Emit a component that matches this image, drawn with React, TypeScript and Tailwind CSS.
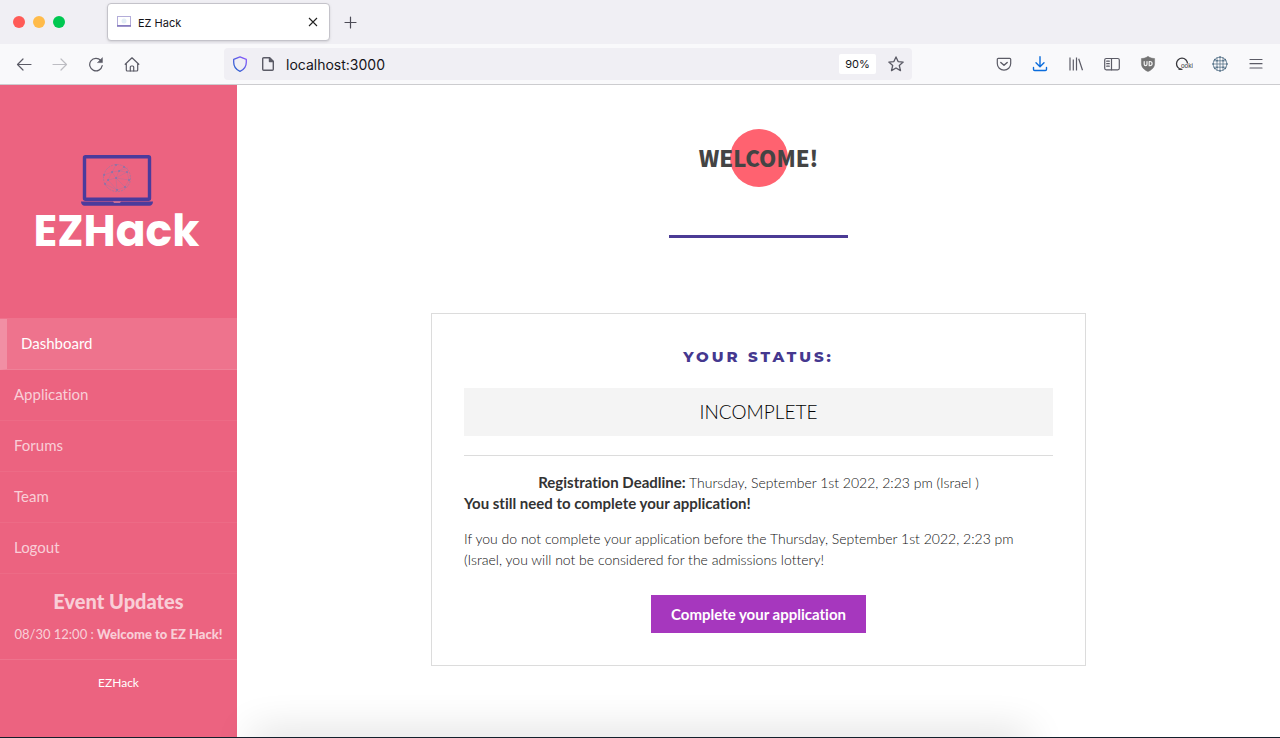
import type { ReactNode } from "react";

function IconButton({ label, children, className = "" }: { label: string; children: ReactNode; className?: string }) {
  return (
    <button type="button" aria-label={label} className={`flex size-9 shrink-0 items-center justify-center ${className}`}>
      <svg
        viewBox="0 0 16 16"
        className="size-4"
        fill="none"
        stroke="currentColor"
        strokeWidth="1.2"
        strokeLinecap="round"
        strokeLinejoin="round"
        aria-hidden="true"
      >
        {children}
      </svg>
    </button>
  );
}

function TabBar() {
  return (
    <div className="flex h-11 items-center bg-[#f0eff4] pl-3">
      <div className="flex w-[95px] gap-2 pl-px">
        <span className="size-3 rounded-full bg-[#ff5b57]" />
        <span className="size-3 rounded-full bg-[#ffbb4a]" />
        <span className="size-3 rounded-full bg-[#00c851]" />
      </div>
      <div className="flex h-[38px] w-[223px] items-center rounded border border-[#c4c3ca] bg-white px-2 shadow-sm">
        <svg viewBox="0 0 16 16" className="size-4" fill="none" aria-hidden="true">
          <rect x="1.500" y="2.500" width="13" height="9" stroke="#b3add9" />
          <path d="M1 12h14" stroke="#7468b5" strokeWidth="1.4" />
          <circle cx="8" cy="7" r="2.5" fill="#e3eef6" />
        </svg>
        <span className="ml-1.5 flex-1 pt-0.5 text-[11px] text-[#15141a]">EZ Hack</span>
        <button type="button" aria-label="Close tab" className="flex size-4 items-center justify-center">
          <svg viewBox="0 0 16 16" className="size-4" stroke="#222" strokeWidth="1.1" aria-hidden="true">
            <path d="M4 4l8 8M12 4l-8 8" />
          </svg>
        </button>
      </div>
      <IconButton label="New tab" className="ml-0.5 text-[#4c4b56]">
        <path d="M8.500 3v11M3 8.500h11" />
      </IconButton>
    </div>
  );
}

function Toolbar() {
  return (
    <div className="flex h-[41px] items-center border-b border-[#cccccf] bg-[#f9f9fb] px-1.5 text-[#5b5b66]">
      <IconButton label="Back">
        <path d="M15 8.500H1.500M7 3L1.500 8.500 7 14" />
      </IconButton>
      <IconButton label="Forward" className="text-[#bdbdc3]">
        <path d="M1 8.500h13.500M9 3L14.500 8.500 9 14" />
      </IconButton>
      <IconButton label="Reload">
        <path d="M14.200 9.700A6.300 6.300 0 1 1 12.800 4.500" strokeWidth="1.200" />
        <path d="M14.400 2v4.600h-4.600z" fill="currentColor" strokeWidth="0.600" />
      </IconButton>
      <IconButton label="Home">
        <path d="M1.200 8.300L8 1.800 14.800 8.300M2.300 7.300V14a1 1 0 0 0 1 1h9.400a1 1 0 0 0 1-1V7.300" />
        <path d="M6.300 15v-4a1 1 0 0 1 1-1h1.400a1 1 0 0 1 1 1v4" />
      </IconButton>
      <div className="ml-[74px] flex h-8 w-[688px] min-w-0 items-center rounded bg-[#f0eff4] px-2">
        <svg viewBox="0 0 16 16" className="size-4 shrink-0" fill="none" aria-hidden="true">
          <defs>
            <linearGradient id="shield" x1="0" y1="1" x2="1" y2="0">
              <stop offset="0" stopColor="#1f63c8" />
              <stop offset="1" stopColor="#9059ff" />
            </linearGradient>
          </defs>
          <path d="M8 .8l6.300 2.500v2.900C14.300 10 12 13.600 8 15.300 4 13.600 1.700 10 1.700 6.200V3.300z" stroke="url(#shield)" strokeWidth="1.300" strokeLinejoin="round" />
        </svg>
        <svg viewBox="0 0 16 16" className="ml-3 size-4 shrink-0" fill="none" stroke="#5b5b66" strokeWidth="1.400" strokeLinejoin="round" aria-hidden="true">
          <path d="M9.500 1.700H3.700a1 1 0 0 0-1 1v10.600a1 1 0 0 0 1 1h8.600a1 1 0 0 0 1-1V5.500z" />
          <path d="M9.500 1.700v3.800h3.800z" fill="#5b5b66" />
        </svg>
        <input
          type="text"
          aria-label="Address"
          defaultValue="localhost:3000"
          className="ml-2.5 h-8 min-w-0 flex-1 bg-transparent pt-px text-sm text-[#15141a] outline-none"
        />
        <button type="button" className="h-5 w-[37px] rounded-xs bg-white text-[11px] text-[#15141a]">
          90%
        </button>
        <button type="button" aria-label="Bookmark this page" className="ml-3 text-[#5b5b66]">
          <svg viewBox="0 0 16 16" className="size-4" fill="none" stroke="currentColor" strokeWidth="1.300" strokeLinejoin="round" aria-hidden="true">
            <path d="M8 .9l2.100 4.700 5.100.500-3.900 3.400 1.200 5.100L8 12l-4.500 2.600 1.200-5.100L.8 6.100l5.100-.500z" />
          </svg>
        </button>
      </div>
      <div className="ml-auto flex">
        <IconButton label="Save to Pocket">
          <path d="M2.300 2.300h11.400a1 1 0 0 1 1 1v4.200a6.700 6.700 0 0 1-13.400 0V3.300a1 1 0 0 1 1-1z" />
          <path d="M4.800 6.400L8 9.300l3.200-2.900" strokeWidth="1.400" />
        </IconButton>
        <IconButton label="Downloads" className="text-[#0a6cdc]">
          <path d="M8 .8v9.700M4 6.700l4 4 4-4M1.500 11.500v1.800a1.200 1.200 0 0 0 1.200 1.200h10.600a1.200 1.200 0 0 0 1.200-1.200v-1.800" strokeWidth="1.400" />
        </IconButton>
        <IconButton label="Library">
          <path d="M2 1.500v13M5.300 3.500v11M8.500 1.500v13M10.700 2.800l3.800 11.500" strokeLinecap="butt" />
        </IconButton>
        <IconButton label="Sidebars">
          <rect x=".7" y="2.500" width="14.600" height="11.300" rx="1.500" />
          <path d="M7.500 2.500v11.300M2.700 5.200h2.600M2.700 7.700h2.600M2.700 10.200h2.600" />
        </IconButton>
        <IconButton label="uBlock Origin">
          <path d="M8 .5c2 1.300 4.300 2 6.600 2v5c0 4-3 6.500-6.600 8-3.600-1.500-6.600-4-6.600-8v-5c2.300 0 4.600-.7 6.600-2z" fill="#747474" stroke="#747474" strokeWidth=".5" />
          <path d="M4.200 5.500v2.800a1.400 1.400 0 0 0 2.800 0V5.500M9.200 5.500v4.200h.8a2.100 2.100 0 0 0 0-4.200z" stroke="#f4f4f4" strokeWidth="1.200" />
        </IconButton>
        <button type="button" aria-label="Qoki" className="flex size-9 shrink-0 items-center justify-center">
          <svg viewBox="0 0 18 16" className="h-4 w-[18px]" fill="none" stroke="#37373c" aria-hidden="true">
            <path d="M6.500 13.200A5.500 5.500 0 1 1 12.500 7.500" strokeWidth="1.300" />
            <path d="M3.500 13.400h4" />
            <text x="6" y="12" fontSize="6.500" fontFamily="Liberation Sans, sans-serif" fill="#37373c" stroke="none">ooki</text>
          </svg>
        </button>
        <IconButton label="Network" className="text-[#4a6880]">
          <circle cx="8" cy="8" r="6.800" strokeWidth=".8" strokeDasharray="2 .7" />
          <path d="M5 1.500v13M11 1.500v13M8 1v14M1 8h14M1.800 4.800h12.400M1.800 11.200h12.400" strokeWidth=".7" />
          <path d="M8 1h.1M8 15h.1M1 8h.1M15 8h.1M2.800 3.500h.1M13.200 3.500h.1M2.800 12.500h.1M13.200 12.500h.1M5 4.800h.1M11 4.800h.1M5 11.200h.1M11 11.200h.1" strokeWidth="1.500" />
        </IconButton>
        <IconButton label="Open menu">
          <path d="M2 3.500h12M2 7.700h12M2 12h12" />
        </IconButton>
      </div>
    </div>
  );
}

function Logo() {
  return (
    <a href="#home" aria-label="EZHack home" className="flex h-[233px] flex-col items-center pt-[70px] pr-1 text-white">
      <svg viewBox="0 0 72 52" className="h-[52px] w-[72px]" fill="none" aria-hidden="true">
        <rect x="3.500" y="1.700" width="65" height="42.500" rx="1" stroke="#4b3b9c" strokeWidth="3.400" />
        <path d="M0 46.500h72c0 2.500-1.500 4.300-3.500 4.300h-65C1.500 50.800 0 49 0 46.500z" fill="#4b3b9c" />
        <path d="M32 46.500h8l-1 1.200h-6z" fill="#ed8098" />
        <circle cx="36" cy="23" r="13.500" stroke="#a0769f" strokeWidth=".8" strokeDasharray="2 1" />
        <path
          d="M23 20l8-3 7-1 9-3M35 10l-4 7-4 8-3 4M27 25l8-2 3-7 8 1 2 8-4 7-8 3-1-12 9 9M24 29l12 6M27 25l9 10M48 25l-13-2-4-6M43 12l-5 4M35 23l11-6"
          stroke="#b0739a"
          strokeWidth=".5"
        />
        <path d="M31 17h.1M38 16h.1M35 10h.1M43 12h.1M27 25h.1M24 29h.1M36 35h.1M44 32h.1M48 25h.1M35 23h.1M46 17h.1M23 20h.1" stroke="#5b79bd" strokeWidth="1.600" strokeLinecap="round" />
      </svg>
      <span className="font-['Poppins','Inter',sans-serif] text-[44px] leading-[48px] font-bold">EZHack</span>
    </a>
  );
}

const links = ["Application", "Forums", "Team", "Logout"];

function Sidebar() {
  return (
    <aside className="w-[237px] shrink-0 bg-[#ec6380] text-white/70">
      <Logo />
      <nav className="border-t border-white/10 text-[15px]">
        <a href="#dashboard" className="flex h-[51px] items-center border-b border-l-[7px] border-b-white/10 border-l-white/20 bg-white/10 pb-0.5 pl-3.5 text-white">
          Dashboard
        </a>
        {links.map((link) => (
          <a key={link} href={`#${link.toLowerCase()}`} className="flex h-[51px] items-center border-b border-white/5 pb-0.5 pl-3.5">
            {link}
          </a>
        ))}
      </nav>
      <section className="h-[86px] border-b border-white/10 px-2 pt-3.5 text-center">
        <h2 className="text-xl leading-[26px] font-black">Event Updates</h2>
        <p className="pt-2.5 text-[13px] leading-5 whitespace-nowrap">
          08/30 12:00 : <b className="font-black">Welcome to EZ Hack!</b>
        </p>
      </section>
      <p className="pt-3.5 text-center text-xs leading-[18px] text-white">EZHack</p>
    </aside>
  );
}

function StatusCard() {
  return (
    <section className="mt-[75px] w-[655px] max-w-full border border-[#dcdcdc] p-8 text-sm leading-[21px] font-light text-[#111]">
      <h2 className="text-center font-['Montserrat','Inter',sans-serif] text-[15px] leading-[21px] font-extrabold tracking-[3px] text-[#45388f]">
        YOUR STATUS:
      </h2>
      <p className="mt-[21px] bg-[#f4f4f4] pb-px text-center text-[19px] leading-[47px] text-black">INCOMPLETE</p>
      <hr className="mt-[19px] border-[#dcdcdc]" />
      <p className="mt-4 text-center">
        <b className="text-[15px] leading-[21px] font-bold text-[#333]">Registration Deadline:</b> Thursday, September 1st 2022, 2:23 pm (Israel )
      </p>
      <p className="text-[15px] leading-[21px] font-bold text-[#333]">You still need to complete your application!</p>
      <p className="mt-3.5">
        If you do not complete your application before the Thursday, September 1st 2022, 2:23 pm (Israel, you will not be considered for the admissions lottery!
      </p>
      <div className="mt-[25px] flex justify-center">
        <a href="#application" className="bg-[#a637be] px-5 text-[15px] leading-[38px] font-bold text-white">
          Complete your application
        </a>
      </div>
    </section>
  );
}

export default function App() {
  return (
    <div className="relative flex min-h-screen flex-col overflow-hidden border-b border-[#14202c] bg-white font-['Inter',sans-serif]">
      <header>
        <TabBar />
        <Toolbar />
      </header>
      <div className="flex flex-1 font-['Lato',sans-serif] [font-variant-ligatures:none]">
        <Sidebar />
        <main className="flex min-w-0 flex-1 flex-col items-center">
          <div className="mt-11 flex size-[58px] items-center justify-center rounded-full bg-[#ff6270] pb-0.5">
            <h1 className="font-['Noto_Sans_CJK_JP',sans-serif] text-[22px] leading-8 font-black whitespace-nowrap text-[#444]">
              WELCOME!
            </h1>
          </div>
          <div className="mt-12 h-[3px] w-[179px] bg-[#4b3b95]" />
          <StatusCard />
        </main>
      </div>
      <div className="pointer-events-none absolute right-[260px] -bottom-3 left-[260px] h-2 shadow-[0_0_40px_8px_rgba(0,0,0,0.16)]" />
    </div>
  );
}
